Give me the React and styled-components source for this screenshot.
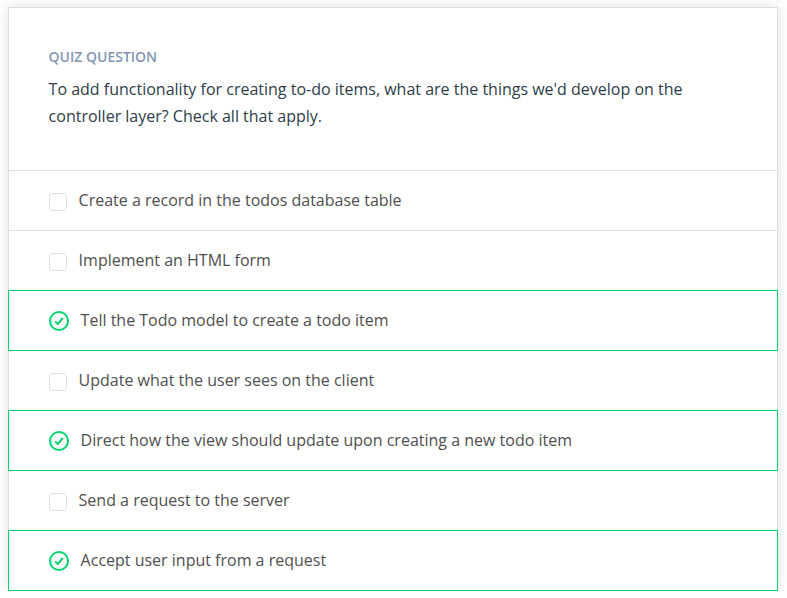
import React from "react";
import styled, { createGlobalStyle } from "styled-components";

const GlobalStyle = createGlobalStyle`
  * { box-sizing: border-box; }
  body { margin: 0; background: #fff; font-family: "Open Sans", sans-serif; }
`;

const Card = styled.section`
  width: 770px;
  height: 584px;
  margin: 7px 0 0 8px;
  border: 1px solid #d9dfe8;
  background: #fff;
  box-shadow: 0 0 12px rgba(46, 61, 73, 0.16);
`;

const Header = styled.header`
  height: 162px;
  padding: 39px 40px 0 39.6px;
`;

const Eyebrow = styled.h2`
  margin: 0;
  font-size: 14px;
  line-height: 20px;
  font-weight: 600;
  color: #8296b4;
  text-transform: uppercase;
`;

const Question = styled.p`
  margin: 9px 0 0;
  font-size: 16px;
  line-height: 27px;
  color: #2e3d49;
`;

const Options = styled.ul`
  margin: 0 -1px;
  padding: 0;
  list-style: none;
`;

const Option = styled.li`
  position: relative;
  display: flex;
  align-items: center;
  gap: 11.6px;
  height: 61px;
  margin-bottom: -1px;
  padding: 0 40px;
  border: 1px solid ${(p) => (p.$correct ? "#02d36f" : "#d9dfe8")};
  z-index: ${(p) => (p.$correct ? 1 : 0)};
`;

const Box = styled.span`
  width: 18px;
  height: 18px;
  margin-top: 3px;
  border: 1px solid #d9dfe8;
  border-radius: 3px;
`;

const Check = styled.svg`
  width: 20px;
  height: 20px;
  margin-top: 1px;
  fill: none;
  stroke: #02d36f;
  stroke-width: 2;
`;

const Label = styled.span`
  margin-bottom: 1px;
  font-size: 16px;
  line-height: 24px;
  color: #4f4f4f;
`;

const options = [
  { text: "Create a record in the todos database table" },
  { text: "Implement an HTML form" },
  { text: "Tell the Todo model to create a todo item", correct: true },
  { text: "Update what the user sees on the client" },
  { text: "Direct how the view should update upon creating a new todo item", correct: true },
  { text: "Send a request to the server" },
  { text: "Accept user input from a request", correct: true },
];

export default function App() {
  return (
    <>
      <GlobalStyle />
      <Card>
        <Header>
          <Eyebrow>Quiz Question</Eyebrow>
          <Question>
            To add functionality for creating to-do items, what are the things we'd develop on the
            controller layer? Check all that apply.
          </Question>
        </Header>
        <Options>
          {options.map((o) => (
            <Option key={o.text} $correct={o.correct}>
              {o.correct ? (
                <Check viewBox="0 0 20 20">
                  <circle cx="10" cy="10" r="9" />
                  <path d="M6.2 10.4l2.6 2.6 5-6" />
                </Check>
              ) : (
                <Box />
              )}
              <Label>{o.text}</Label>
            </Option>
          ))}
        </Options>
      </Card>
    </>
  );
}
